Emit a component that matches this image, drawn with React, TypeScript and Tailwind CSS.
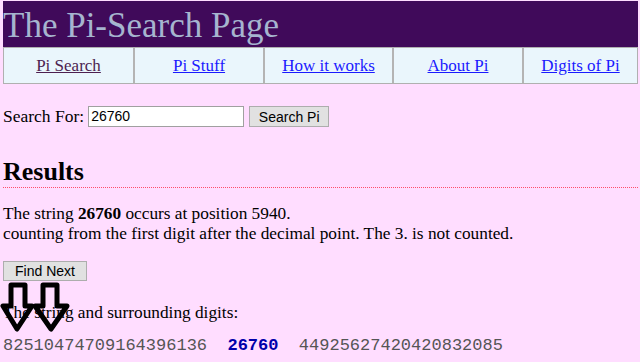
import React from 'react';

const navItems = [
  { label: 'Pi Search', visited: true, w: 'w-[129px]' },
  { label: 'Pi Stuff', visited: false, w: 'w-[130px]' },
  { label: 'How it works', visited: false, w: 'w-[129px]' },
  { label: 'About Pi', visited: false, w: 'w-[130px]' },
  { label: 'Digits of Pi', visited: false, w: 'flex-1' },
];

const serif = 'font-["Liberation_Serif","Times_New_Roman",serif]';
const sans = 'font-["Liberation_Sans",Arial,sans-serif]';

const App = () => {
  const [query, setQuery] = React.useState('26760');

  return (
    <div className={`relative min-h-[362px] bg-[#ffddff] pt-px pl-[3px] pr-[2px] text-black ${serif}`}>
      {/* Title bar */}
      <div className="h-[46px] bg-[#400a5a] flex items-center">
        <h1 className="text-[35px] leading-none text-[#a6b5cf] pt-[2px]">The Pi-Search Page</h1>
      </div>

      {/* Nav table */}
      <div className="flex h-[37px] bg-[#eaf6fc] border border-[#b0b0b0]">
        {navItems.map((item, i) => (
          <div
            key={item.label}
            className={`${item.w} flex items-center justify-center text-[17px] ${i > 0 ? 'border-l-2 border-[#b4b4b4]' : ''}`}
          >
            <a
              href="#"
              className={`underline ${item.visited ? 'text-[#4d1f50]' : 'text-[#1a1aff]'}`}
            >
              {item.label}
            </a>
          </div>
        ))}
      </div>

      {/* Search form */}
      <div className="flex items-center mt-[19px] text-[17.5px]">
        <span>Search For:</span>
        <input
          value={query}
          onChange={(e) => setQuery(e.target.value)}
          className={`ml-[4px] w-[156px] h-[21px] bg-white border border-[#a0a0a0] px-[2px] text-[14px] ${sans} outline-none`}
        />
        <button className={`ml-[5px] w-[80px] h-[21px] bg-[#e1e1e1] border border-[#adadad] text-[14px] ${sans}`}>
          Search Pi
        </button>
      </div>

      {/* Results heading */}
      <h2 className="mt-[29px] text-[26px] font-bold leading-[28px] pb-[1px] border-b border-dotted border-[#ff4d6a]">
        Results
      </h2>

      <div className="mt-[16px] text-[17.3px] leading-[20px]">
        <p>
          The string <b>26760</b> occurs at position 5940.
        </p>
        <p>counting from the first digit after the decimal point. The 3. is not counted.</p>
      </div>

      <button className={`mt-[17px] w-[84px] h-[20px] bg-[#e1e1e1] border border-[#adadad] text-[14px] leading-none ${sans}`}>
        Find Next
      </button>

      <p className="mt-[20px] text-[17.3px] leading-[20px]">The string and surrounding digits:</p>

      <p className={`mt-[13px] whitespace-pre text-[17px] leading-[20px] text-[#555] font-["Liberation_Mono","Courier_New",monospace]`}>
        {'82510474709164396136  '}
        <b className="text-[#0000aa]">26760</b>
        {'  44925627420420832085'}
      </p>

      {/* Arrow annotations */}
      <svg className="absolute left-0 top-0 pointer-events-none" width="90" height="362" viewBox="0 0 90 362">
        <polygon
          points="11,285 25,285 25,306 32,306 17,329 3,306 11,306"
          fill="none"
          stroke="black"
          strokeWidth="5"
          strokeLinejoin="round"
        />
        <polygon
          points="43,285 57,285 57,306 67,306 51,329 35,306 43,306"
          fill="none"
          stroke="black"
          strokeWidth="5"
          strokeLinejoin="round"
        />
      </svg>
    </div>
  );
};

export default App;
